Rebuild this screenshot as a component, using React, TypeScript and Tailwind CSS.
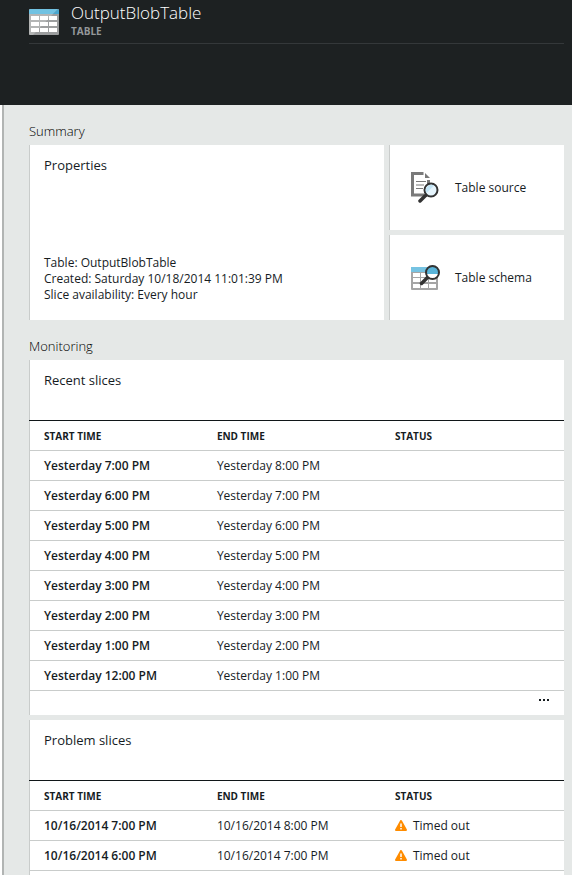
import type { ReactNode } from "react";

type Slice = { start: string; end: string; status?: string };

const recentSlices: Slice[] = [
  { start: "Yesterday 7:00 PM", end: "Yesterday 8:00 PM" },
  { start: "Yesterday 6:00 PM", end: "Yesterday 7:00 PM" },
  { start: "Yesterday 5:00 PM", end: "Yesterday 6:00 PM" },
  { start: "Yesterday 4:00 PM", end: "Yesterday 5:00 PM" },
  { start: "Yesterday 3:00 PM", end: "Yesterday 4:00 PM" },
  { start: "Yesterday 2:00 PM", end: "Yesterday 3:00 PM" },
  { start: "Yesterday 1:00 PM", end: "Yesterday 2:00 PM" },
  { start: "Yesterday 12:00 PM", end: "Yesterday 1:00 PM" },
];

const problemSlices: Slice[] = [
  { start: "10/16/2014 7:00 PM", end: "10/16/2014 8:00 PM", status: "Timed out" },
  { start: "10/16/2014 6:00 PM", end: "10/16/2014 7:00 PM", status: "Timed out" },
];

function TableIcon() {
  return (
    <svg width="30" height="26" viewBox="0 0 30 26" aria-hidden="true">
      <rect width="30" height="26" rx="1" fill="#9c9e9f" />
      <path d="M1 0H29L24 5H0V1Z" fill="#71c2e2" />
      <path d="M29 0L30 1V5H24Z" fill="#48a6cf" />
      <path d="M24 5L4 26H1L0 25V5Z" fill="#b3b5b5" />
      <g fill="#fff">
        {[7, 13, 19].map((y) =>
          [2, 11, 20].map((x) => <rect key={`${x}-${y}`} x={x} y={y} width="8" height="4" />),
        )}
      </g>
    </svg>
  );
}

function SourceIcon() {
  return (
    <svg width="28" height="31" viewBox="0 0 28 31" aria-hidden="true">
      <path d="M12.500 1.500H1.500V23H13M17.500 8V12" fill="none" stroke="#7a7a7a" strokeWidth="3" />
      <path d="M14 1L19 6H14Z" fill="#7a7a7a" />
      <path d="M5 9.500H15M5 13H13M5 16.500H12" stroke="#7a7a7a" strokeWidth="1" />
      <path d="M15 23L9 29" stroke="#333" strokeWidth="3.500" strokeLinecap="round" />
      <circle cx="20" cy="18" r="6.500" fill="#e6f5fd" stroke="#333" strokeWidth="2" />
      <path d="M15.500 21A5.500 5.500 0 0 1 23 13.500Z" fill="#c4e6f7" />
    </svg>
  );
}

function SchemaIcon() {
  return (
    <svg width="29" height="25" viewBox="0 0 29 25" aria-hidden="true">
      <rect y="2" width="27" height="23" rx="1" fill="#a5a5a5" />
      <rect y="2" width="27" height="5" fill="#76c3e2" />
      <g fill="#fff">
        {[8, 13, 19].map((y) =>
          [2, 10, 18].map((x) => <rect key={`${x}-${y}`} x={x} y={y} width="7" height="4" />),
        )}
      </g>
      <path d="M17 12L10.500 18.500" stroke="#333" strokeWidth="3.500" strokeLinecap="round" />
      <circle cx="21.500" cy="7.500" r="6.500" fill="#fff" />
      <path d="M15 9V7A6.500 6.500 0 0 1 28 7V9Z" fill="#59b4d9" />
      <circle cx="21.500" cy="7.500" r="6.500" fill="none" stroke="#333" strokeWidth="2" />
    </svg>
  );
}

function WarningIcon() {
  return (
    <svg width="12" height="11" viewBox="0 0 12 11" className="shrink-0" aria-hidden="true">
      <path d="M6 1L11 10H1Z" fill="#ff8c00" stroke="#ff8c00" strokeWidth="2" strokeLinejoin="round" />
      <path d="M6 3.500V7M6 8V9.500" stroke="#fff" strokeWidth="1.500" />
    </svg>
  );
}

function Tile({ icon, label }: { icon: ReactNode; label: string }) {
  return (
    <button
      type="button"
      className="flex h-[85px] w-full items-center border-l border-[#c9cccb] bg-white pl-[21px] text-left text-[12px] leading-4"
    >
      <span className="flex w-11 shrink-0">{icon}</span>
      {label}
    </button>
  );
}

function SliceCard({ title, slices, className = "", children }: { title: string; slices: Slice[]; className?: string; children?: ReactNode }) {
  return (
    <section className={`flex flex-col ${className}`}>
      <h3 className="h-[60px] border-l border-[#c9cccb] bg-white pt-[10px] pl-[14px] text-[13px] leading-5">{title}</h3>
      <div className="h-px bg-[#101618]" />
      <div className="flex-1 border-l border-[#c9cccb] bg-white">
        <table className="w-full table-fixed border-separate border-spacing-0 text-left text-[12px] leading-4">
          <thead>
            <tr className="text-[10px] [&>th]:h-[30px] [&>th]:border-b [&>th]:border-[#c9cccb] [&>th]:font-bold">
              <th scope="col" className="w-[35%] pl-[14px]">START TIME</th>
              <th scope="col" className="w-1/3">END TIME</th>
              <th scope="col">STATUS</th>
            </tr>
          </thead>
          <tbody>
            {slices.map((s) => (
              <tr key={s.start} className="[&>td]:h-[30px] [&>td]:border-b [&>td]:border-[#c9cccb]">
                <td className="pl-[14px] font-semibold">{s.start}</td>
                <td>{s.end}</td>
                <td>
                  {s.status && (
                    <span className="flex items-center gap-[6px]">
                      <WarningIcon />
                      {s.status}
                    </span>
                  )}
                </td>
              </tr>
            ))}
          </tbody>
        </table>
        {children}
      </div>
    </section>
  );
}

export default function App() {
  return (
    <div className="flex min-h-screen flex-col bg-[#e5e8e7] font-['Open_Sans','Noto_Sans',sans-serif] text-[#161c1f]">
      <header className="h-[105px] bg-[#1d2122] pr-2 pl-[29px]">
        <div className="flex h-11 border-b border-[#34383a]">
          <div className="w-[42px] pt-[9px]">
            <TableIcon />
          </div>
          <div>
            <h1 className="pt-px text-[17px] leading-6 font-light text-white">OutputBlobTable</h1>
            <p className="text-[10px] leading-3 font-bold text-[#94989a]">TABLE</p>
          </div>
        </div>
      </header>
      <div className="flex flex-1 border-l-2 border-white">
        <main className="flex flex-1 flex-col border-l-2 border-[#b1b4b3] pr-2 pl-[25px]">
          <h2 className="h-10 pt-4 text-[13px] leading-5 font-light text-black">Summary</h2>
          <div className="grid grid-cols-[71fr_35fr] gap-[5px]">
            <section className="flex flex-col justify-between border-l border-[#c9cccb] bg-white pt-[10px] pb-[17px] pl-[14px]">
              <h3 className="text-[13px] leading-5">Properties</h3>
              <div className="text-[12px] leading-4">
                <p>Table: OutputBlobTable</p>
                <p>Created: Saturday 10/18/2014 11:01:39 PM</p>
                <p>Slice availability: Every hour</p>
              </div>
            </section>
            <div className="flex flex-col gap-[5px]">
              <Tile icon={<SourceIcon />} label="Table source" />
              <Tile icon={<SchemaIcon />} label="Table schema" />
            </div>
          </div>
          <h2 className="h-10 pt-4 text-[13px] leading-5 font-light text-black">Monitoring</h2>
          <SliceCard title="Recent slices" slices={recentSlices}>
            <div className="flex h-6 justify-end pr-[15px]">
              <button type="button" aria-label="More recent slices" className="flex h-[18px] items-center gap-[2px]">
                <span className="size-[2px] bg-[#161c1f]" />
                <span className="size-[2px] bg-[#161c1f]" />
                <span className="size-[2px] bg-[#161c1f]" />
              </button>
            </div>
          </SliceCard>
          <SliceCard title="Problem slices" slices={problemSlices} className="mt-[5px] flex-1" />
        </main>
      </div>
    </div>
  );
}
